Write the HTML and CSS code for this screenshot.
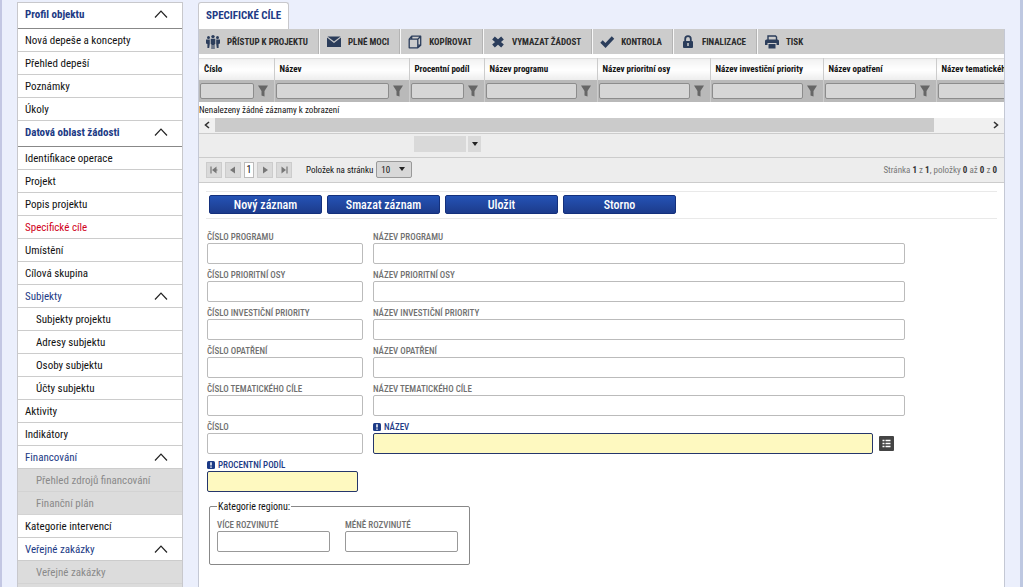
FILE: index.html
```html
<!DOCTYPE html>
<html lang="cs">
<head>
<meta charset="utf-8">
<title>Specifické cíle</title>
<link rel="stylesheet" href="styles.css">
</head>
<body>
<svg class="defs" aria-hidden="true">
  <symbol id="chev" viewBox="0 0 14 8"><path d="M1 7.5 7 1.2 13 7.5" fill="none" stroke="#222" stroke-width="1.2"/></symbol>
  <symbol id="funnel" viewBox="0 0 10 12"><path d="M0 .5h10L6.500 6v5.500l-3-1V6z" fill="#666"/></symbol>
  <symbol id="req" viewBox="0 0 8 8"><rect width="8" height="8" rx="1.5" fill="#1b3a86"/><path d="M4 1.200v3.300M4 5.500v1.300" stroke="#fff" stroke-width="1.500"/></symbol>
</svg>
<div class="page">
  <nav class="side">
    <button class="head">Profil objektu<svg><use href="#chev"/></svg></button>
    <a href="#">Nová depeše a koncepty</a>
    <a href="#">Přehled depeší</a>
    <a href="#">Poznámky</a>
    <a href="#">Úkoly</a>
    <button class="head">Datová oblast žádosti<svg><use href="#chev"/></svg></button>
    <a href="#">Identifikace operace</a>
    <a href="#">Projekt</a>
    <a href="#">Popis projektu</a>
    <a href="#" class="active">Specifické cíle</a>
    <a href="#">Umístění</a>
    <a href="#">Cílová skupina</a>
    <button class="group">Subjekty<svg><use href="#chev"/></svg></button>
    <a href="#" class="sub">Subjekty projektu</a>
    <a href="#" class="sub">Adresy subjektu</a>
    <a href="#" class="sub">Osoby subjektu</a>
    <a href="#" class="sub">Účty subjektu</a>
    <a href="#">Aktivity</a>
    <a href="#">Indikátory</a>
    <button class="group">Financování<svg><use href="#chev"/></svg></button>
    <a href="#" class="sub off">Přehled zdrojů financování</a>
    <a href="#" class="sub off">Finanční plán</a>
    <a href="#">Kategorie intervencí</a>
    <button class="group">Veřejné zakázky<svg><use href="#chev"/></svg></button>
    <a href="#" class="sub off">Veřejné zakázky</a>
    <a href="#" class="sub off"></a>
  </nav>

  <main class="main">
    <h1 class="tab">SPECIFICKÉ CÍLE</h1>
    <div class="panel">
      <div class="toolbar">
        <button><svg viewBox="0 0 16 16"><g fill="#2b3d5b"><circle cx="3.500" cy="3.600" r="1.500"/><circle cx="8" cy="2.600" r="1.700"/><circle cx="12.500" cy="3.600" r="1.500"/><path d="M1 5.500h3.800v4.200l-.6 4.300H2.400V10L1 9.500zM15 5.500h-3.800v4.200l.6 4.300h1.800V10l1.400-.5zM5.700 4.800h4.600V10l-.8.500V15H8.400v-4h-.8v4H6.500v-4.500L5.700 10z"/></g></svg>PŘÍSTUP K PROJEKTU</button>
        <button><svg viewBox="0 0 16 16"><path d="M1 3.500 8 9l7-5.500V13H1z" fill="#2b3d5b"/><path d="M1.500 2.500h13L8 7.500z" fill="#2b3d5b"/></svg>PLNÉ MOCI</button>
        <button><svg viewBox="0 0 16 16"><path d="M2.200 5.200h8.600v8.600H2.200zM4.700 5V2.200h9v9H11M2.200 5.200l2.500-3M10.800 5.200l2.900-3M10.800 13.800l2.900-2.600" fill="none" stroke="#2b3d5b" stroke-width="1.300" stroke-linejoin="round"/></svg>KOPÍROVAT</button>
        <button><svg viewBox="0 0 16 16"><path d="M3.500 4 12.500 12M12.500 4 3.500 12" stroke="#2b3d5b" stroke-width="4"/></svg>VYMAZAT ŽÁDOST</button>
        <button><svg viewBox="0 0 16 16"><path d="M2.500 7.500 6.500 11.500 14 3.500" fill="none" stroke="#2b3d5b" stroke-width="3.400"/></svg>KONTROLA</button>
        <button><svg viewBox="0 0 16 16"><path d="M5.200 8V5a2.800 2.800 0 0 1 5.600 0v3" fill="none" stroke="#2b3d5b" stroke-width="1.800"/><rect x="3" y="7" width="10" height="7" rx="1" fill="#2b3d5b"/><path d="M8 9v3" stroke="#ccc" stroke-width="1.500"/></svg>FINALIZACE</button>
        <button><svg viewBox="0 0 16 16"><path d="M4 6V2h7.500L12.500 3v3" fill="none" stroke="#2b3d5b" stroke-width="1.400"/><path d="M1 7q0-1.500 1.500-1.500h11Q15 5.500 15 7v4h-2.500V9h-9v2H1zM4.500 10h7v4.500h-7z" fill="#2b3d5b"/></svg>TISK</button>
      </div>

      <div class="scroll">
        <table class="grid">
          <colgroup><col class="c-s"><col class="c-l"><col class="c-s"><col class="c-m"><col class="c-m"><col class="c-m"><col class="c-m"><col class="c-m"></colgroup>
          <thead>
            <tr><th>Číslo</th><th>Název</th><th>Procentní podíl</th><th>Název programu</th><th>Název prioritní osy</th><th>Název investiční priority</th><th>Název opatření</th><th>Název tematického cíle</th></tr>
            <tr class="filters">
              <td><div><input aria-label="Filtr Číslo"><button aria-label="Filtrovat"><svg><use href="#funnel"/></svg></button></div></td>
              <td><div><input aria-label="Filtr Název"><button aria-label="Filtrovat"><svg><use href="#funnel"/></svg></button></div></td>
              <td><div><input aria-label="Filtr Procentní podíl"><button aria-label="Filtrovat"><svg><use href="#funnel"/></svg></button></div></td>
              <td><div><input aria-label="Filtr Název programu"><button aria-label="Filtrovat"><svg><use href="#funnel"/></svg></button></div></td>
              <td><div><input aria-label="Filtr Název prioritní osy"><button aria-label="Filtrovat"><svg><use href="#funnel"/></svg></button></div></td>
              <td><div><input aria-label="Filtr Název investiční priority"><button aria-label="Filtrovat"><svg><use href="#funnel"/></svg></button></div></td>
              <td><div><input aria-label="Filtr Název opatření"><button aria-label="Filtrovat"><svg><use href="#funnel"/></svg></button></div></td>
              <td><div><input aria-label="Filtr Název tematického cíle"><button aria-label="Filtrovat"><svg><use href="#funnel"/></svg></button></div></td>
            </tr>
          </thead>
          <tbody><tr><td class="empty" colspan="8">Nenalezeny žádné záznamy k zobrazení</td></tr></tbody>
        </table>
      </div>
      <div class="hbar">
        <button aria-label="Posunout vlevo"><svg viewBox="0 0 8 8"><path d="M6 1 2.500 4 6 7" fill="none" stroke="#333" stroke-width="1.600"/></svg></button>
        <div class="track"><div class="thumb"></div></div>
        <button aria-label="Posunout vpravo"><svg viewBox="0 0 8 8"><path d="M2 1 5.500 4 2 7" fill="none" stroke="#333" stroke-width="1.600"/></svg></button>
      </div>
      <div class="summary">
        <input aria-label="Souhrn"><button aria-label="Vybrat souhrn"><svg viewBox="0 0 6 4"><path d="M0 0h6L3 4z" fill="#222"/></svg></button>
      </div>
      <div class="pager">
        <button aria-label="První"><svg viewBox="0 0 8 8"><path d="M1 .5v7M3.500 4h4" stroke="#777" stroke-width="1.200"/><path d="M6.500.5v7L2 4z" fill="#777"/></svg></button>
        <button aria-label="Předchozí"><svg viewBox="0 0 8 8"><path d="M6 .5v7L1 4z" fill="#777"/></svg></button>
        <button class="current">1</button>
        <button aria-label="Další"><svg viewBox="0 0 8 8"><path d="M2 .5v7L7 4z" fill="#777"/></svg></button>
        <button aria-label="Poslední"><svg viewBox="0 0 8 8"><path d="M7 .5v7" stroke="#777" stroke-width="1.200"/><path d="M1.500.5v7L6 4z" fill="#777"/></svg></button>
        <label for="size">Položek na stránku</label>
        <span class="select"><select id="size"><option>10</option><option>20</option></select></span>
        <p class="status">Stránka <b>1</b> z <b>1</b>, položky <b>0</b> až <b>0</b> z <b>0</b></p>
      </div>

      <div class="actions">
        <button>Nový záznam</button>
        <button>Smazat záznam</button>
        <button>Uložit</button>
        <button>Storno</button>
      </div>

      <form class="form">
        <div class="field"><label for="f1">ČÍSLO PROGRAMU</label><input id="f1"></div>
        <div class="field"><label for="f2">NÁZEV PROGRAMU</label><input id="f2"></div>
        <div class="field"><label for="f3">ČÍSLO PRIORITNÍ OSY</label><input id="f3"></div>
        <div class="field"><label for="f4">NÁZEV PRIORITNÍ OSY</label><input id="f4"></div>
        <div class="field"><label for="f5">ČÍSLO INVESTIČNÍ PRIORITY</label><input id="f5"></div>
        <div class="field"><label for="f6">NÁZEV INVESTIČNÍ PRIORITY</label><input id="f6"></div>
        <div class="field"><label for="f7">ČÍSLO OPATŘENÍ</label><input id="f7"></div>
        <div class="field"><label for="f8">NÁZEV OPATŘENÍ</label><input id="f8"></div>
        <div class="field"><label for="f9">ČÍSLO TEMATICKÉHO CÍLE</label><input id="f9"></div>
        <div class="field"><label for="f10">NÁZEV TEMATICKÉHO CÍLE</label><input id="f10"></div>
        <div class="field"><label for="f11">ČÍSLO</label><input id="f11"></div>
        <div class="field required"><label for="f12"><svg><use href="#req"/></svg>NÁZEV</label>
          <div class="lookup"><input id="f12" required><button type="button" aria-label="Vybrat ze seznamu"><svg viewBox="0 0 15 15"><rect width="15" height="15" rx="1" fill="#444"/><path d="M3.500 4.500h2M3.500 7.500h2M3.500 10.500h2M6.500 4.500h5M6.500 7.500h5M6.500 10.500h5" stroke="#fff" stroke-width="1.600"/></svg></button></div>
        </div>
        <div class="field required percent"><label for="f13"><svg><use href="#req"/></svg>PROCENTNÍ PODÍL</label><input id="f13" required></div>
      </form>
      <fieldset class="region">
        <legend>Kategorie regionu:</legend>
        <div class="pair">
          <div class="field"><label for="f14">VÍCE ROZVINUTÉ</label><input id="f14"></div>
          <div class="field"><label for="f15">MÉNĚ ROZVINUTÉ</label><input id="f15"></div>
        </div>
      </fieldset>
    </div>
  </main>
</div>
</body>
</html>
```

FILE: styles.css
```css
* { box-sizing: border-box; }
html { background: #ebeffc; overflow: hidden; }
body {
  margin: 0;
  height: 100vh;
  overflow: hidden;
  background: #ebeffc;
  font-family: "Roboto Condensed", "Liberation Sans Narrow", Roboto, sans-serif;
  font-size: 11px;
  color: #111;
}
button, input, select { font: inherit; color: inherit; margin: 0; }
button { padding: 0; border: 0; background: none; }
input { min-width: 0; padding: 0 4px; }
svg { display: block; flex: none; }
.defs { position: absolute; width: 0; height: 0; }

.page {
  display: flex;
  gap: 15px;
  min-height: 100vh;
  padding: 2px 15px 0 15px;
  border-left: 2px solid #c3c7e3;
  border-right: 3px solid #bec8e1;
}

/* Navigation */
.side {
  flex: none;
  align-self: flex-start;
  width: 166px;
  border: 1px solid #c8c8cc;
  background: #fff;
}
.side a, .side button {
  display: flex;
  align-items: center;
  justify-content: space-between;
  width: 100%;
  height: 23px;
  padding: 0 14px 0 7px;
  border-bottom: 1px solid #ccc;
  color: #111;
  text-decoration: none;
  white-space: nowrap;
}
.side button svg { width: 14px; height: 8px; }
.side .head { height: 26px; padding-bottom: 3px; border-bottom-color: #888; font-weight: bold; color: #213a85; }
.side .group { color: #213a85; }
.side .active { color: #d0021b; }
.side .sub { padding-left: 18px; }
.side .off { background: #dcdcdc; border-color: #d3d3d3; color: #8a8a8a; }

/* Main panel */
.main { flex: 1; min-width: 0; display: flex; flex-direction: column; align-items: flex-start; }
.tab {
  margin: 0;
  padding: 0 7px;
  border: 1px solid #c8c8cc;
  border-bottom: 0;
  border-radius: 3px 3px 0 0;
  background: #fff;
  font-size: 11px;
  line-height: 26px;
  color: #213a85;
}
.panel {
  flex: 1;
  width: 100%;
  border: 1px solid #c4c8d4;
  border-top: 0;
  background: #fff;
}
.toolbar { display: flex; height: 25px; background: #ccc; }
.toolbar button {
  display: flex;
  align-items: center;
  gap: 6px;
  padding: 0 11px 0 6px;
  border-right: 1px solid #f8f8f8;
  box-shadow: inset -1px 0 #b4b4b4;
  font-size: 9px;
  font-weight: bold;
  color: #2a2a2a;
  white-space: nowrap;
}
.toolbar button:last-child { border-right: 0; box-shadow: none; }
.toolbar svg { width: 16px; height: 16px; }

/* Data grid */
.scroll { margin-top: 4px; overflow: hidden; }
.grid { width: 850px; table-layout: fixed; border-collapse: collapse; font-size: 9px; }
.c-s { width: 75px; }
.c-l { width: 135px; }
.c-m { width: 113px; }
.grid th {
  height: 21px;
  padding: 0 5px;
  border-top: 1px solid #ddd;
  border-right: 1px solid #ccc;
  background: linear-gradient(#f2f2f2, #fff 50%, #ececec);
  text-align: left;
  white-space: nowrap;
}
.filters td { height: 22px; padding: 0; border-right: 1px solid #ccc; background: #b9b9b9; }
.filters div { display: flex; align-items: center; gap: 4px; padding: 0 6px 0 1px; }
.filters input {
  flex: 1;
  height: 16px;
  border: 1px solid #8c8c8c;
  border-radius: 2px;
  background: #d6d6d6;
}
.filters svg { width: 10px; height: 12px; }
.grid .empty { height: 16px; padding: 0; }
.hbar { display: flex; align-items: center; height: 15px; background: #f0f0f0; }
.hbar button { display: grid; place-items: center; width: 16px; }
.hbar svg { width: 8px; height: 8px; }
.track { flex: 1; }
.thumb { width: 93%; height: 14px; background: #cbcbcb; }
.summary {
  display: flex;
  align-items: center;
  gap: 2px;
  height: 24px;
  padding: 0 0 2px 215px;
  border-top: 1px solid #ccc;
  background: #ededed;
}
.summary input { width: 52px; height: 16px; border: 0; background: #d9d9d9; }
.summary button { display: grid; place-items: center; width: 13px; height: 16px; background: #d9d9d9; }
.summary svg { width: 6px; height: 4px; }
.pager {
  display: flex;
  align-items: center;
  gap: 3px;
  height: 26px;
  padding: 0 7px;
  border-top: 1px solid #ccc;
  border-bottom: 1px solid #ccc;
  background: #ededed;
  font-size: 9px;
}
.pager button {
  display: grid;
  place-items: center;
  width: 16px;
  height: 16px;
  border: 1px solid #ccc;
  background: #dadada;
}
.pager svg { width: 8px; height: 8px; }
.pager .current { width: 10px; border-color: #bbb; background: #fff; font-size: 10px; }
.pager label { margin-left: 11px; }
.select { position: relative; }
.select::after {
  content: "";
  position: absolute;
  top: 6px;
  right: 7px;
  border: 3px solid transparent;
  border-top: 4px solid #222;
  border-bottom: 0;
}
.select select {
  appearance: none;
  display: block;
  width: 36px;
  height: 17px;
  padding: 0 4px;
  border: 1px solid #999;
  border-radius: 2px;
  background: #d8d8d8;
}
.status { margin: 0 0 0 auto; color: #777; }
.status b { color: #333; }

/* Form */
.actions {
  display: flex;
  gap: 5px;
  margin: 8px 7px 0;
  padding: 3px 3px 4px;
  border-top: 1px solid #e9e9e9;
  border-bottom: 1px solid #e9e9e9;
}
.actions button {
  width: 113px;
  height: 19px;
  padding-top: 2px;
  border: 1px solid #14307c;
  border-radius: 2px;
  background: linear-gradient(#2553b5, #1c3b8c);
  color: #fff;
  font-size: 12px;
  font-weight: 500;
}
.form {
  display: grid;
  grid-template-columns: 156px 1fr;
  gap: 5px 10px;
  padding: 12px 99px 0 8px;
}
.field { display: flex; flex-direction: column; min-width: 0; }
.field label {
  display: flex;
  align-items: center;
  gap: 3px;
  height: 12px;
  font-size: 9px;
  font-weight: 500;
  color: #707070;
  white-space: nowrap;
}
.field label svg { width: 8px; height: 8px; }
.field input { width: 100%; height: 21px; border: 1px solid #bbb; border-radius: 2px; background: #fff; }
.required label { color: #213a85; }
.required input { border-color: #25366b; background: #fef9c0; }
.percent { padding-right: 5px; }
.lookup { display: flex; align-items: center; gap: 6px; padding-right: 11px; }
.lookup svg { width: 15px; height: 15px; }
.region {
  width: 261px;
  margin: 8px 0 0 10px;
  padding: 6px 11px 12px 7px;
  border: 1px solid #888;
  border-radius: 2px;
}
.region legend { padding: 0 1px; font-size: 10px; line-height: 13px; }
.pair { display: grid; grid-template-columns: 1fr 1fr; gap: 15px; }
.pair input { border-color: #999; }
```
